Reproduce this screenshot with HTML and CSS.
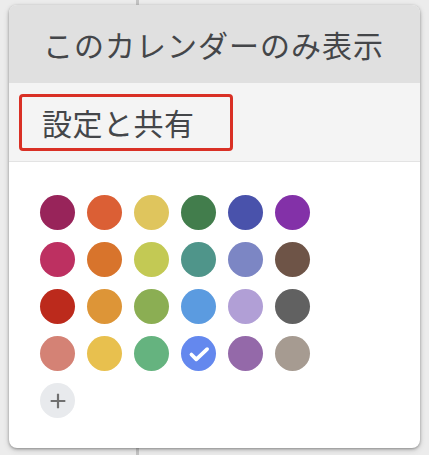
FILE: index.html
```html
<!DOCTYPE html>
<html lang="ja">
<head>
<meta charset="utf-8">
<link rel="stylesheet" href="styles.css">
</head>
<body>
<div class="menu">
  <div class="item item-hover">このカレンダーのみ表示</div>
  <div class="item item-focus"><span class="outline">設定と共有</span></div>
  <div class="palette">
    <div class="grid">
      <span class="dot" style="background:#98245a"></span>
      <span class="dot" style="background:#db5f35"></span>
      <span class="dot" style="background:#dfc55d"></span>
      <span class="dot" style="background:#427d4c"></span>
      <span class="dot" style="background:#4952ab"></span>
      <span class="dot" style="background:#8331a8"></span>
      <span class="dot" style="background:#bd3061"></span>
      <span class="dot" style="background:#d8742c"></span>
      <span class="dot" style="background:#c3c954"></span>
      <span class="dot" style="background:#4f958a"></span>
      <span class="dot" style="background:#7c86c4"></span>
      <span class="dot" style="background:#6e5447"></span>
      <span class="dot" style="background:#bc2a1c"></span>
      <span class="dot" style="background:#dd9537"></span>
      <span class="dot" style="background:#8bae53"></span>
      <span class="dot" style="background:#5b9be0"></span>
      <span class="dot" style="background:#b19fd6"></span>
      <span class="dot" style="background:#616161"></span>
      <span class="dot" style="background:#d48275"></span>
      <span class="dot" style="background:#e8c04e"></span>
      <span class="dot" style="background:#65b37f"></span>
      <span class="dot checked" style="background:#6488ee">
        <svg viewBox="0 0 24 24" width="26" height="26"><path d="M5 12.5l4.5 4.5L19.5 7.5" fill="none" stroke="#fff" stroke-width="3.4" stroke-linecap="round" stroke-linejoin="round"/></svg>
      </span>
      <span class="dot" style="background:#9469a9"></span>
      <span class="dot" style="background:#a69b91"></span>
      <span class="dot add">
        <svg viewBox="0 0 24 24" width="22" height="22"><path d="M12 4v16M4 12h16" fill="none" stroke="#707070" stroke-width="2.4"/></svg>
      </span>
    </div>
  </div>
</div>
</body>
</html>
```
FILE: styles.css
```css
html, body {
  margin: 0;
  height: 100%;
}
body {
  background:
    linear-gradient(to right, transparent 136px, #c4c4c4 136px, #c4c4c4 139px, transparent 139px),
    #ececec;
  padding: 5px 9px 0 9px;
  box-sizing: border-box;
  font-family: "Noto Sans CJK JP", "Noto Sans", sans-serif;
  color: #444649;
}
.menu {
  width: 411px;
  height: 443px;
  background: #fff;
  border-radius: 8px;
  overflow: hidden;
  box-shadow: 0 1px 3px rgba(0,0,0,0.35), 0 2px 6px rgba(0,0,0,0.15);
  display: flex;
  flex-direction: column;
}
.item {
  font-size: 30px;
  line-height: 1;
  display: flex;
  align-items: center;
}
.item-hover {
  background: #e0e0e0;
  height: 78px;
  padding-left: 34px;
  letter-spacing: 1px;
}
.item-focus {
  background: #f4f4f4;
  height: 78px;
  padding-left: 10px;
  border-bottom: 1px solid #e3e3e3;
  letter-spacing: 0.5px;
}
.outline {
  border: 3px solid #d93025;
  border-radius: 4px;
  width: 214px;
  height: 57px;
  box-sizing: border-box;
  padding-left: 20px;
  display: flex;
  align-items: center;
}
.palette {
  padding: 33px 0 0 31px;
}
.grid {
  display: grid;
  grid-template-columns: repeat(6, 35px);
  grid-auto-rows: 35px;
  gap: 12px;
}
.dot {
  width: 35px;
  height: 35px;
  border-radius: 50%;
  display: flex;
  align-items: center;
  justify-content: center;
}
.add {
  background: #e8eaed;
}
```
